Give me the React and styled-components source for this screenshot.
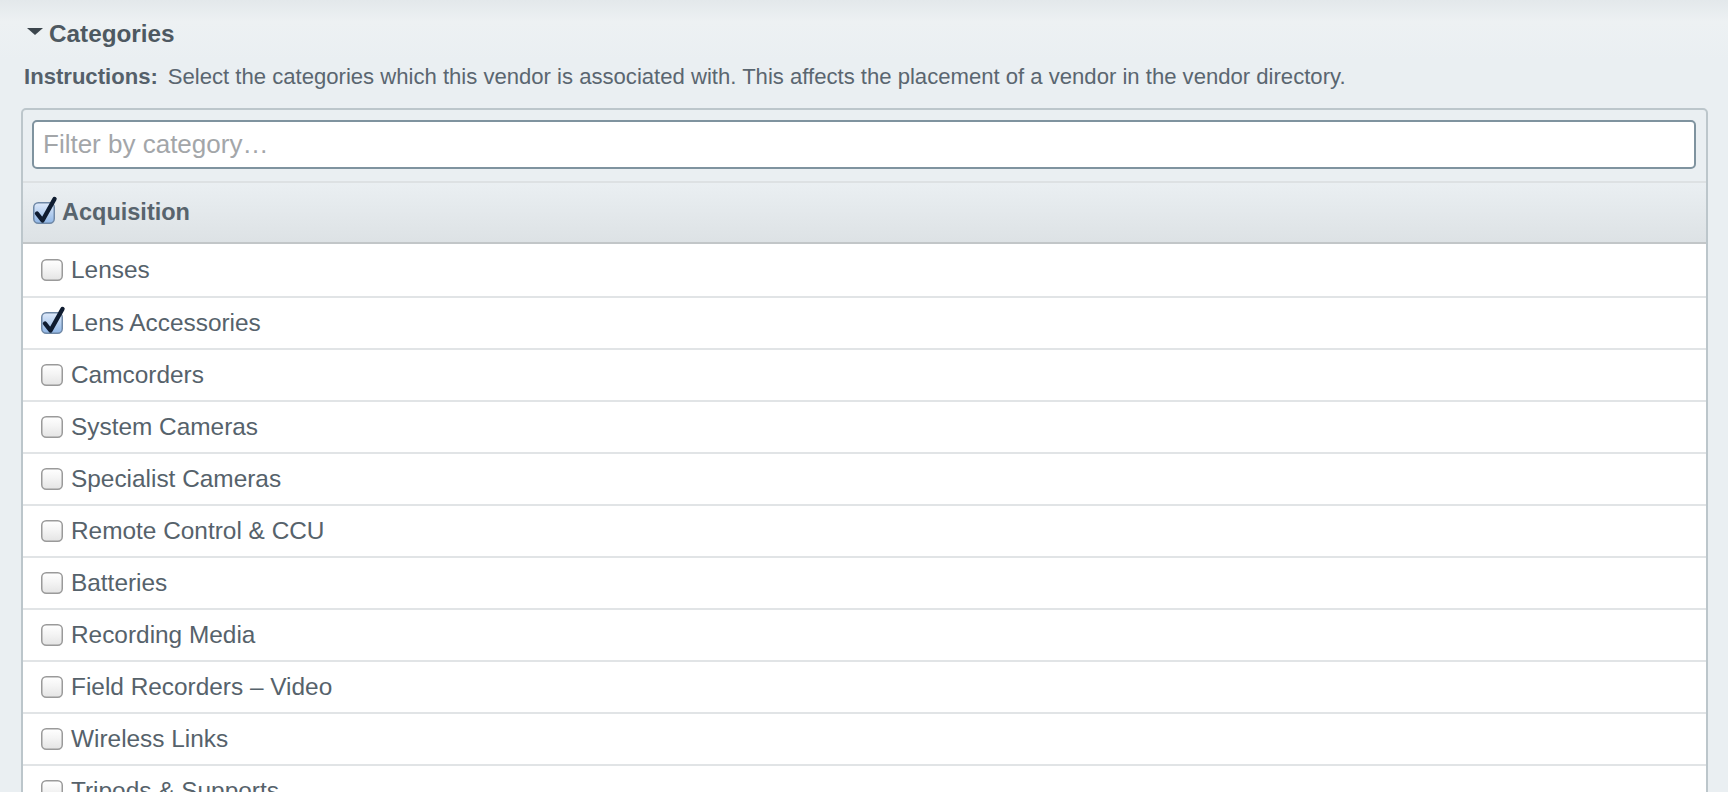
import React from "react";
import styled, { createGlobalStyle } from "styled-components";

const GlobalStyle = createGlobalStyle`
  html, body { margin: 0; padding: 0; }
  body {
    background: linear-gradient(#e3e8eb 0px, #edf1f3 22px, #eaeff2 60px, #eaeff2 100%);
    font-family: "Liberation Sans", Arial, Helvetica, sans-serif;
    color: #56626b;
    overflow: hidden;
  }
`;

const Page = styled.div`
  padding: 21px 20px 0 21px;
`;

const SectionTitle = styled.div`
  display: flex;
  align-items: center;
  gap: 6px;
  height: 26px;
  font-weight: bold;
  font-size: 24.3px;
  color: #4e5961;
  padding-left: 6px;
`;

const Triangle = styled.span`
  width: 0;
  height: 0;
  border-left: 8px solid transparent;
  border-right: 8px solid transparent;
  border-top: 7px solid #3c464d;
  margin-top: -5px;
`;

const Instructions = styled.p`
  margin: 17px 0 0 3px;
  font-size: 22.1px;
  line-height: 26px;
  color: #5a6670;
  strong { color: #55606a; margin-right: 10px; }
`;

const Panel = styled.div`
  margin-top: 18px;
  border: 2px solid #bcc6cb;
  border-radius: 5px;
  overflow: hidden;
  background: #eaeff2;
`;

const FilterBar = styled.div`
  padding: 10px 10px 12px 9px;
  border-bottom: 2px solid #dde1e3;
`;

const FilterInput = styled.input`
  box-sizing: border-box;
  display: block;
  width: 100%;
  height: 49px;
  border: 2px solid #7f939f;
  border-radius: 5px;
  background: #fff;
  padding: 0 9px;
  font-family: "Liberation Sans", Arial, sans-serif;
  font-size: 26px;
  color: #56626b;
  outline: none;
  &::placeholder { color: #a3a6a9; }
`;

const GroupHeader = styled.label`
  display: flex;
  align-items: center;
  gap: 7px;
  height: 59px;
  padding-left: 10px;
  background: linear-gradient(#eaeff2, #dde2e5);
  border-bottom: 2px solid #c2c6c8;
  font-weight: bold;
  font-size: 23.5px;
  color: #58646d;
`;

const List = styled.div`
  background: #fff;
`;

const Row = styled.label`
  display: flex;
  align-items: center;
  gap: 8px;
  height: 50px;
  padding-left: 18px;
  border-bottom: 2px solid #e1e4e6;
  font-size: 24.4px;
  color: #56626b;
  &:first-child { height: 52px; }
`;

const BoxSvg = styled.svg`
  flex: none;
  overflow: visible;
  display: block;
`;

function CheckBox({ checked, id }) {
  const gid = `g-${id}`;
  return (
    <BoxSvg width="22" height="22" viewBox="0 0 22 22">
      <defs>
        <linearGradient id={gid} x1="0" y1="0" x2="0" y2="1">
          {checked ? (
            <>
              <stop offset="0" stopColor="#dfeafa" />
              <stop offset="0.5" stopColor="#b7d0f0" />
              <stop offset="1" stopColor="#8fb6e6" />
            </>
          ) : (
            <>
              <stop offset="0" stopColor="#ffffff" />
              <stop offset="0.5" stopColor="#f3f3f3" />
              <stop offset="1" stopColor="#e4e4e4" />
            </>
          )}
        </linearGradient>
      </defs>
      <rect
        x="0.75"
        y="0.75"
        width="20.5"
        height="20.5"
        rx="4.5"
        fill={`url(#${gid})`}
        stroke={checked ? "#6f88a6" : "#9a9a9a"}
        strokeWidth="1.5"
      />
      {checked && (
        <path
          d="M4 11.5 L9.5 18.5 L21.5 -3"
          fill="none"
          stroke="#0f1c30"
          strokeWidth="4.4"
          strokeLinecap="round"
          strokeLinejoin="round"
        />
      )}
    </BoxSvg>
  );
}

const items = [
  ["Lenses", false],
  ["Lens Accessories", true],
  ["Camcorders", false],
  ["System Cameras", false],
  ["Specialist Cameras", false],
  ["Remote Control & CCU", false],
  ["Batteries", false],
  ["Recording Media", false],
  ["Field Recorders \u2013 Video", false],
  ["Wireless Links", false],
  ["Tripods & Supports", false],
  ["Lighting", false],
];

export default function App() {
  return (
    <>
      <GlobalStyle />
      <Page>
        <SectionTitle>
          <Triangle />
          Categories
        </SectionTitle>
        <Instructions>
          <strong>Instructions:</strong>
          Select the categories which this vendor is associated with. This affects the placement of a vendor in the vendor directory.
        </Instructions>
        <Panel>
          <FilterBar>
            <FilterInput placeholder="Filter by category…" />
          </FilterBar>
          <GroupHeader>
            <CheckBox checked id="head" />
            Acquisition
          </GroupHeader>
          <List>
            {items.map(([name, checked], i) => (
              <Row key={name}>
                <CheckBox checked={checked} id={`r${i}`} />
                {name}
              </Row>
            ))}
          </List>
        </Panel>
      </Page>
    </>
  );
}
